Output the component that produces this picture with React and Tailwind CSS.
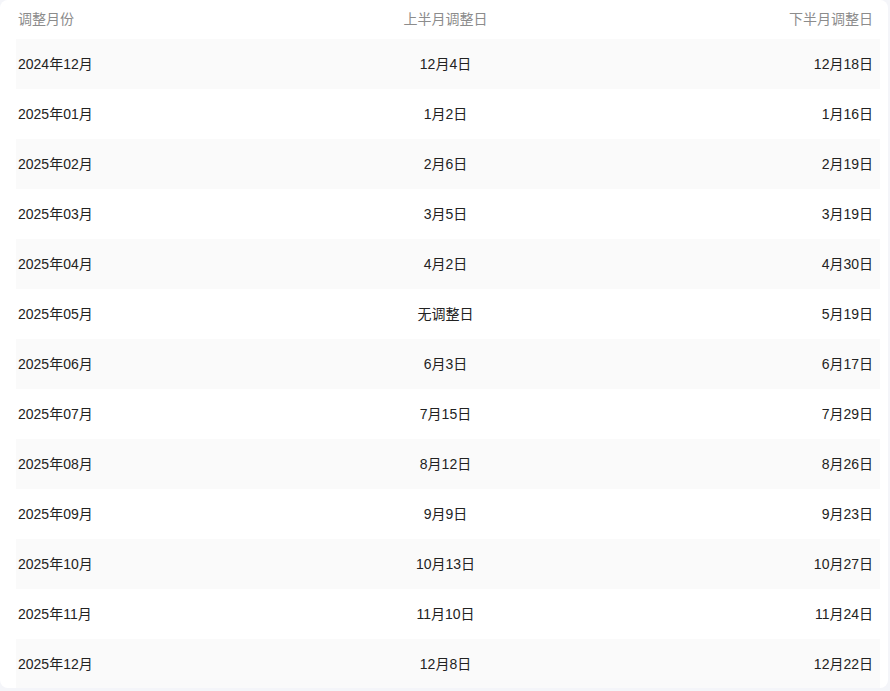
const rows = [
  ['2024年12月', '12月4日', '12月18日'],
  ['2025年01月', '1月2日', '1月16日'],
  ['2025年02月', '2月6日', '2月19日'],
  ['2025年03月', '3月5日', '3月19日'],
  ['2025年04月', '4月2日', '4月30日'],
  ['2025年05月', '无调整日', '5月19日'],
  ['2025年06月', '6月3日', '6月17日'],
  ['2025年07月', '7月15日', '7月29日'],
  ['2025年08月', '8月12日', '8月26日'],
  ['2025年09月', '9月9日', '9月23日'],
  ['2025年10月', '10月13日', '10月27日'],
  ['2025年11月', '11月10日', '11月24日'],
  ['2025年12月', '12月8日', '12月22日'],
]

export default function App() {
  return (
    <div
      className="w-[890px] h-[691px] bg-[#f4f5f9] overflow-hidden"
      style={{ fontFamily: '"Liberation Sans", "Noto Sans CJK SC", sans-serif' }}
    >
      <div className="w-[888px] h-[688px] bg-white rounded-lg overflow-hidden pl-4 pr-2">
        {/* header */}
        <div className="grid grid-cols-3 h-[39px] items-center pl-[2px] pr-[7px] text-[14px] text-[#8c8c8c]">
          <span>调整月份</span>
          <span className="text-center">上半月调整日</span>
          <span className="text-right">下半月调整日</span>
        </div>

        {/* body */}
        {rows.map((r, i) => (
          <div
            key={r[0]}
            className={`grid grid-cols-3 h-[50px] items-center pl-[2px] pr-[7px] text-[14px] text-[#222] ${
              i % 2 === 0 ? 'bg-[#fafafa]' : 'bg-white'
            }`}
          >
            <span>{r[0]}</span>
            <span className="text-center">{r[1]}</span>
            <span className="text-right">{r[2]}</span>
          </div>
        ))}
      </div>
    </div>
  )
}
